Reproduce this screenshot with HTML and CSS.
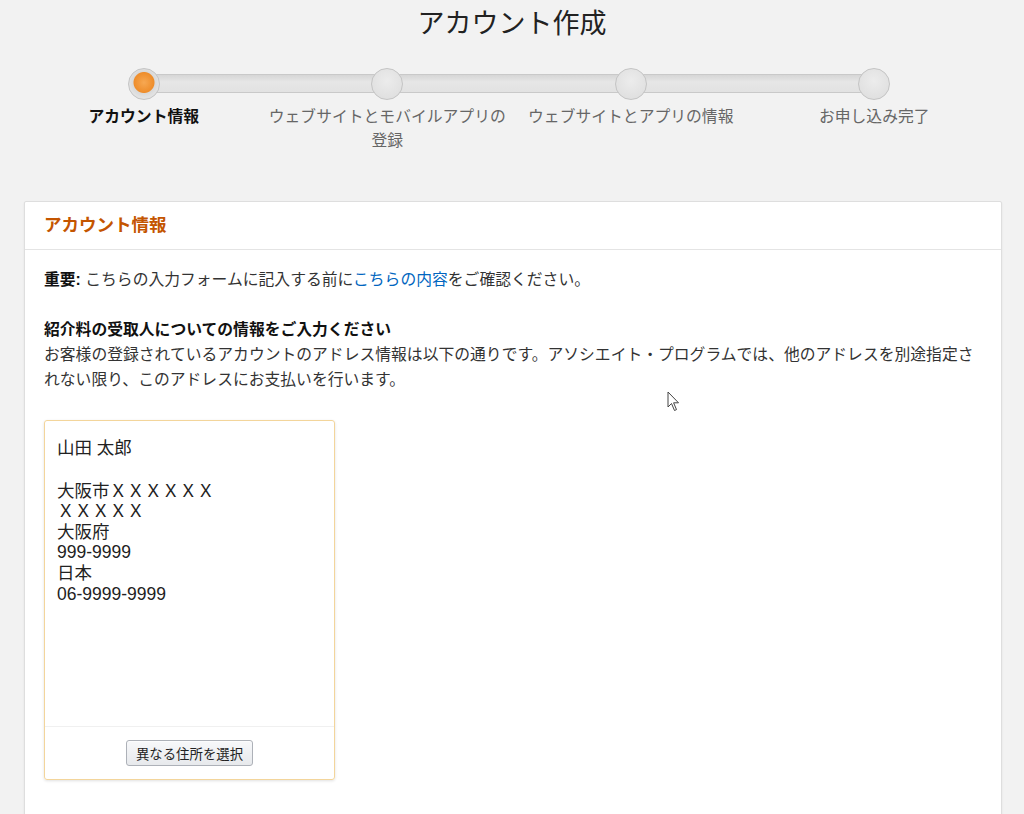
FILE: index.html
```html
<!DOCTYPE html>
<html>
<head>
    <title>アカウント作成</title>
    <meta charset="UTF-8" />
    <link rel="stylesheet" href="styles.css">
</head>
<body>
    <h1 class="page-title">アカウント作成</h1>

    <div class="progress">
        <div class="track"></div>
        <div class="step active">
            <div class="dot"></div>
            <div class="label">アカウント情報</div>
        </div>
        <div class="step">
            <div class="dot"></div>
            <div class="label">ウェブサイトとモバイルアプリの登録</div>
        </div>
        <div class="step">
            <div class="dot"></div>
            <div class="label">ウェブサイトとアプリの情報</div>
        </div>
        <div class="step">
            <div class="dot"></div>
            <div class="label">お申し込み完了</div>
        </div>
    </div>

    <div class="card">
        <div class="card-header">アカウント情報</div>
        <div class="card-body">
            <p class="notice"><strong>重要:</strong> こちらの入力フォームに記入する前に<a href="#">こちらの内容</a>をご確認ください。</p>

            <h3 class="section-title">紹介料の受取人についての情報をご入力ください</h3>
            <p class="section-text">お客様の登録されているアカウントのアドレス情報は以下の通りです。アソシエイト・プログラムでは、他のアドレスを別途指定されない限り、このアドレスにお支払いを行います。</p>

            <div class="address-box">
                <div class="address">
                    <div class="name">山田 太郎</div>
                    <div>大阪市ＸＸＸＸＸＸ</div>
                    <div>ＸＸＸＸＸ</div>
                    <div>大阪府</div>
                    <div>999-9999</div>
                    <div>日本</div>
                    <div>06-9999-9999</div>
                </div>
                <div class="address-footer">
                    <button class="btn">異なる住所を選択</button>
                </div>
            </div>
        </div>
    </div>

    <!-- mouse pointer visible in the capture -->
    <svg class="pointer" width="14" height="22" viewBox="0 0 14 22">
        <path d="M1 1 L1 16 L4.5 12.5 L7.5 19.5 L9.5 18.6 L6.6 11.8 L11.5 11.8 Z" fill="#fff" stroke="#444" stroke-width="1"/>
    </svg>
</body>
</html>
```

FILE: styles.css
```css
body {
    font-family: "Liberation Sans", "Noto Sans CJK JP", sans-serif;
    margin: 0;
    background: #f2f2f2;
    color: #333;
    font-size: 15.8px;
    overflow: hidden;
}

.page-title {
    margin: 0;
    padding-top: 6px;
    text-align: center;
    font-size: 27px;
    font-weight: normal;
    line-height: 36px;
    color: #222;
}

.progress {
    position: relative;
    display: grid;
    grid-template-columns: repeat(4, 1fr);
    width: 974px;
    margin: 26px 0 0 22px;
}

.track {
    position: absolute;
    top: 6px;
    left: 12.5%;
    right: 12.5%;
    height: 17px;
    background: linear-gradient(#d6d6d6, #e6e6e6 40%, #e2e2e2);
    border: 1px solid #c9c9c9;
    border-radius: 2px;
}

.step {
    position: relative;
    display: flex;
    flex-direction: column;
    align-items: center;
}

.dot {
    width: 30px;
    height: 30px;
    border-radius: 50%;
    background: radial-gradient(circle at 50% 40%, #ececec, #dcdcdc);
    border: 1px solid #c4c4c4;
}

.step.active .dot {
    background: radial-gradient(circle at 50% 45%, #f7a852 0, #ee8d2b 10px, #d9d9d9 11px, #e2e2e2 15px);
}

.label {
    margin-top: 5px;
    width: 240px;
    text-align: center;
    line-height: 24px;
    color: #666;
}

.step.active .label {
    font-weight: bold;
    color: #111;
}

.card {
    margin: 48px 22px 0 24px;
    background: #fff;
    border: 1px solid #dedede;
    border-radius: 2px;
    box-shadow: 0 1px 2px rgba(0,0,0,0.08);
    height: 640px;
}

.card-header {
    padding: 0 19px;
    height: 47px;
    line-height: 47px;
    border-bottom: 1px solid #e4e4e4;
    font-size: 17.5px;
    font-weight: bold;
    color: #c45500;
}

.card-body {
    padding: 18px 19px;
}

.notice {
    margin: 0;
    line-height: 24px;
}

.notice strong {
    color: #111;
}

.notice a {
    color: #0066c0;
    text-decoration: none;
}

.section-title {
    margin: 26px 0 0;
    font-size: 15.8px;
    line-height: 24px;
    color: #111;
}

.section-text {
    margin: 0;
    line-height: 25px;
}

.address-box {
    margin-top: 28px;
    width: 289px;
    height: 358px;
    border: 1px solid #f3d59b;
    border-radius: 3px;
    box-shadow: 0 1px 3px rgba(0,0,0,0.12);
    display: flex;
    flex-direction: column;
}

.address {
    flex: 1;
    padding: 17px 12px;
    font-size: 17.5px;
    line-height: 20.6px;
    color: #222;
}

.address .name {
    margin-bottom: 22px;
}

.address-footer {
    height: 52px;
    border-top: 1px solid #f0f0f0;
    display: flex;
    align-items: center;
    justify-content: center;
}

.btn {
    font-family: "Liberation Sans", "Noto Sans CJK JP", sans-serif;
    font-size: 13.4px;
    height: 26px;
    padding: 0 9px;
    color: #222;
    background: linear-gradient(#f7f8fa, #e7e9ec);
    border: 1px solid #adb1b8;
    border-radius: 3px;
    box-shadow: 0 1px 0 rgba(255,255,255,0.6) inset;
    cursor: pointer;
}

.pointer {
    position: absolute;
    left: 667px;
    top: 391px;
}
```
